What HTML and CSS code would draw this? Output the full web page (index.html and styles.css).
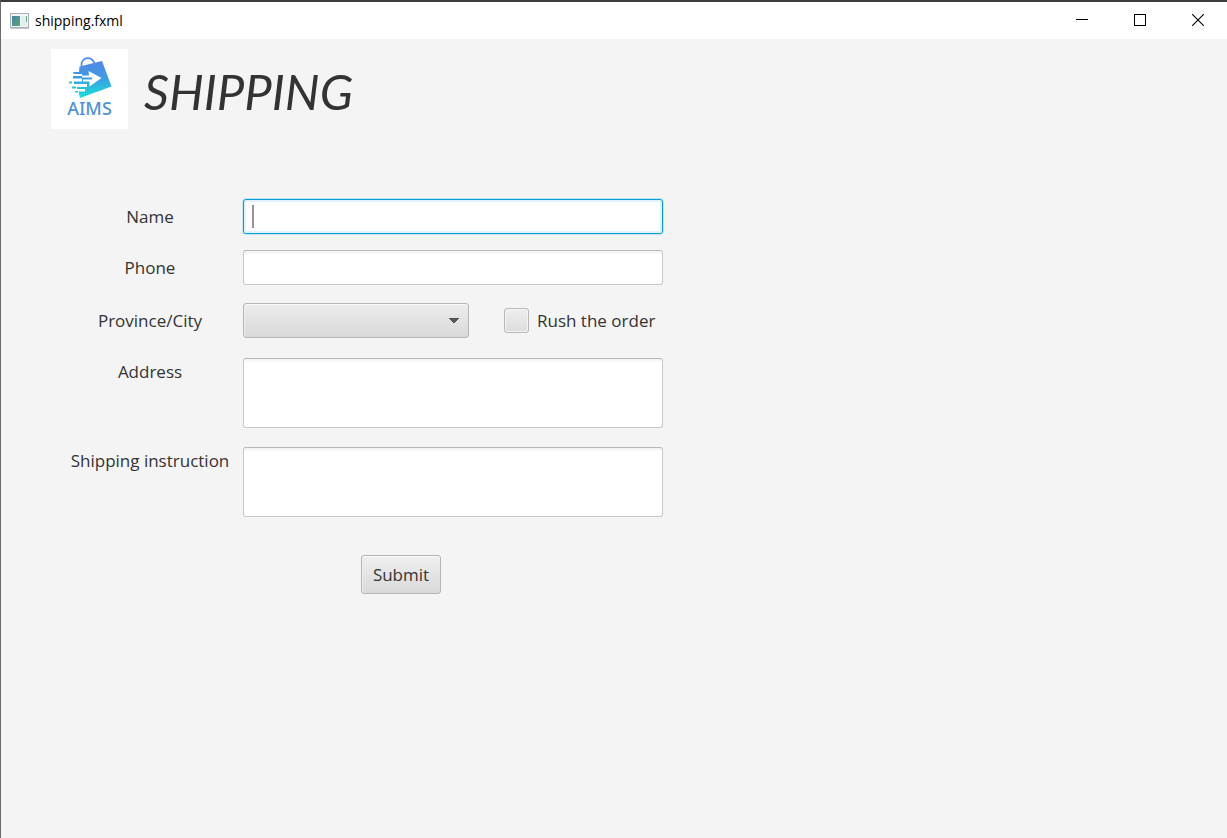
FILE: index.html
```html
<!DOCTYPE html>
<html lang="en">
<head>
<meta charset="utf-8">
<meta name="viewport" content="width=device-width, initial-scale=1">
<title>shipping.fxml</title>
<link rel="stylesheet" href="styles.css">
</head>
<body>
<div class="window">
  <header class="titlebar">
    <svg class="app-icon" width="19" height="16" viewBox="0 0 19 16" aria-hidden="true">
      <defs>
        <linearGradient id="pane" x1="0" y1="0" x2="1" y2="1">
          <stop offset="0" stop-color="#4a7fa0"/><stop offset="1" stop-color="#58a878"/>
        </linearGradient>
      </defs>
      <rect x=".5" y=".5" width="18" height="14" fill="#f4f5f7" stroke="#a9b0b8"/>
      <path d="M1 15.5h18" stroke="#c2c7cd"/>
      <rect x="2" y="3" width="8" height="10" fill="url(#pane)"/>
      <rect x="11" y="3" width="6" height="10" fill="#e4edf0"/>
      <rect x="16" y="3" width="1" height="6" fill="#63a986"/>
    </svg>
    <span class="titlebar-text">shipping.fxml</span>
    <div class="window-controls">
      <button class="window-button" type="button" aria-label="Minimize"><svg width="12" height="12" viewBox="0 0 12 12"><path d="M0 5.5h12" stroke="#000"/></svg></button>
      <button class="window-button" type="button" aria-label="Maximize"><svg width="12" height="12" viewBox="0 0 12 12"><rect x=".5" y=".5" width="11" height="11" fill="none" stroke="#000"/></svg></button>
      <button class="window-button" type="button" aria-label="Close"><svg width="12" height="12" viewBox="0 0 12 12"><path d="M0 0l12 12M12 0L0 12" stroke="#000" stroke-width="1.1"/></svg></button>
    </div>
  </header>
  <main class="content">
    <div class="brand">
      <div class="logo">
        <svg class="logo-mark" width="44" height="42" viewBox="0 0 44 42" aria-hidden="true">
          <defs>
            <linearGradient id="bag" x1="0" y1="0" x2="0" y2="1">
              <stop offset="0" stop-color="#5088e4"/><stop offset=".45" stop-color="#3f9be4"/><stop offset="1" stop-color="#16e2d8"/>
            </linearGradient>
          </defs>
          <path d="M13.500 9C13 4 16 1.200 19.500 1.200C23 1.200 25.500 3.500 26.500 6.500" fill="none" stroke="#4f8be3" stroke-width="1.700"/>
          <path d="M11.500 9.500L34 4L43.500 29.500L12 41L10.500 34.500H17V32H9V30H19V27H6V24.500H14V21.500H5V19H14V17H5.500V15H11Z" fill="url(#bag)"/>
          <path d="M1 24.500h3v2h-3zM4 29.500h4v2h-4zM7 34h3v1.500h-3z" fill="#2fc5df"/>
          <path d="M20.500 14L33.500 21L21.500 29.500V24.500H15V22.500H24V20.500H14V18.500H21Z" fill="#fff"/>
        </svg>
        <span class="logo-text">AIMS</span>
      </div>
      <h1 class="heading">SHIPPING</h1>
    </div>
    <form class="form">
      <label class="label" for="name">Name</label>
      <input class="field field-active" id="name" type="text">

      <label class="label" for="phone">Phone</label>
      <input class="field" id="phone" type="text">

      <label class="label" for="province">Province/City</label>
      <div class="options">
        <select class="field province" id="province"><option></option></select>
        <label class="rush"><input class="checkbox" type="checkbox">Rush the order</label>
      </div>

      <label class="label label-top" for="address">Address</label>
      <textarea class="field area" id="address"></textarea>

      <label class="label label-top" for="instruction">Shipping instruction</label>
      <textarea class="field area" id="instruction"></textarea>

      <button class="submit" type="button">Submit</button>
    </form>
  </main>
</div>
</body>
</html>
```
FILE: styles.css
```css
* {
  box-sizing: border-box;
}

body {
  margin: 0;
  background: #f4f4f4;
  color: #333;
  font-family: "Open Sans", "Noto Sans", sans-serif;
  font-size: 17px;
  line-height: 24px;
}

.window {
  min-height: 100vh;
  border-top: 2px solid #3c3c3c;
  border-left: 1px solid #6b6b6b;
}

.titlebar {
  display: flex;
  align-items: center;
  height: 37px;
  padding-left: 9px;
  background: #fff;
  color: #000;
}

.app-icon {
  margin-right: 6px;
}

.titlebar-text {
  font-size: 14px;
}

.window-controls {
  display: flex;
  align-self: stretch;
  margin-left: auto;
  padding-bottom: 2px;
}

.window-button {
  display: flex;
  align-items: center;
  justify-content: center;
  width: 58px;
  padding: 0;
  border: 0;
  background: none;
}

.content {
  padding: 10px 0 40px 50px;
}

.brand {
  display: flex;
  align-items: center;
  gap: 16px;
}

.logo {
  display: flex;
  flex-direction: column;
  align-items: center;
  width: 77px;
  height: 80px;
  padding-top: 8px;
  background: #fff;
}

.logo-text {
  color: #5090e0;
  font-family: "Noto Sans", sans-serif;
  font-size: 18px;
  font-weight: 500;
  line-height: 18px;
}

.heading {
  margin: 0;
  padding-top: 4px;
  font-family: Lato, sans-serif;
  font-size: 49px;
  font-style: italic;
  font-weight: 400;
  line-height: 76px;
}

.form {
  display: grid;
  grid-template-columns: 186px minmax(0, 420px);
  grid-template-rows: auto minmax(37px, auto) minmax(39px, auto) minmax(73px, auto);
  align-items: start;
  row-gap: 16px;
  padding: 70px 20px 0 6px;
}

.label {
  padding-top: 6px;
  text-align: center;
}

.label-top {
  padding-top: 2px;
}

.field {
  width: 100%;
  height: 35px;
  padding: 4px 9px;
  border: 1px solid #c8c8c8;
  border-top-color: #b8b8b8;
  border-radius: 3px;
  background: linear-gradient(#f2f2f2, #fff 4px);
  color: #333;
  font: inherit;
  outline: none;
}

.field-active {
  border-color: #039ed3;
  background: linear-gradient(#969696, #969696) 8px center / 2px 23px no-repeat, #fff;
  box-shadow: 0 0 0 1px #c5e5f0, inset 0 0 0 2px #e1f3fa;
}

.area {
  display: block;
  height: 70px;
  resize: none;
}

.options {
  display: flex;
  align-items: center;
  gap: 35px;
}

.province {
  appearance: none;
  width: 226px;
  border-color: #b5b5b5;
  background:
    linear-gradient(to bottom left, #555 50%, transparent 51%) right 14px center / 5px 5px no-repeat,
    linear-gradient(to bottom right, #555 50%, transparent 51%) right 9px center / 5px 5px no-repeat,
    linear-gradient(#ececec, #d9d9d9);
  box-shadow: inset 0 1px #f8f8f8, inset 1px 0 #eee;
}

.rush {
  display: flex;
  align-items: center;
  gap: 8px;
  white-space: nowrap;
}

.checkbox {
  appearance: none;
  width: 25px;
  height: 25px;
  margin: 0;
  border: 1px solid #b8b8b8;
  border-radius: 3px;
  background: linear-gradient(#efefef, #dcdcdc);
  box-shadow: inset 0 0 0 1px #f4f4f4;
}

.submit {
  grid-column: 2;
  justify-self: start;
  width: 80px;
  height: 39px;
  margin: 22px 0 0 118px;
  padding: 0;
  border: 1px solid #b5b5b5;
  border-radius: 3px;
  background: linear-gradient(#efefef, #d9d9d9);
  box-shadow: inset 0 1px #fafafa, inset 1px 0 #eee;
  color: #333;
  font: inherit;
}
```
